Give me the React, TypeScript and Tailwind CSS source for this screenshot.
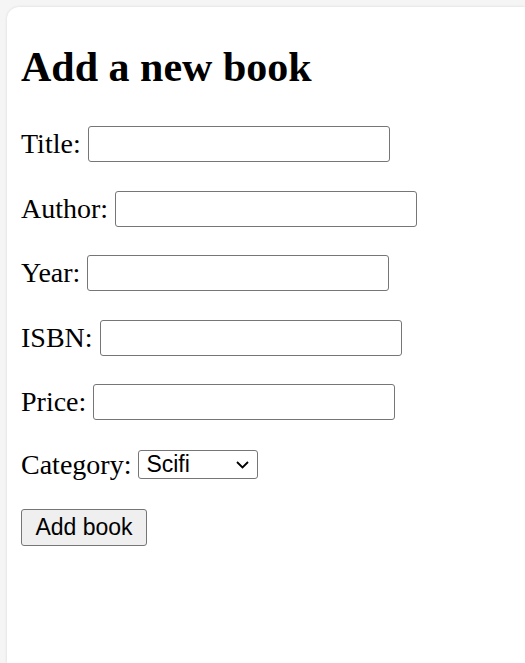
import React from 'react';

const fields = ['Title', 'Author', 'Year', 'ISBN', 'Price'];

export default function App() {
  return (
    <div className="min-h-screen bg-[#f5f5f5] pl-[7px] pt-[7px] overflow-hidden font-['Liberation_Serif',serif] text-black">
      <div className="bg-white rounded-tl-[12px] shadow-[0_0_3px_rgba(0,0,0,0.12)] min-h-[656px] pl-[14px] pt-[36px]">
        <h1 className="text-[42px] font-bold leading-[48px] mb-[35px]">Add a new book</h1>

        <form className="flex flex-col gap-[28px]" onSubmit={e => e.preventDefault()}>
          {fields.map(f => (
            <div key={f} className="flex items-center h-[36.5px] text-[28px]">
              <label className="leading-[32px]">{f}:</label>
              <input
                type="text"
                className="ml-[7px] w-[302px] h-[36px] border border-[#767676] rounded-[3px] bg-white px-[3px] font-['Liberation_Sans',sans-serif] text-[23px]"
              />
            </div>
          ))}

          <div className="flex items-center h-[32px] text-[28px]">
            <label className="leading-[32px]">Category:</label>
            <div className="relative flex ml-[7px]">
              <select className="appearance-none w-[120px] h-[29px] border border-[#767676] rounded-[3px] bg-white pl-[7px] font-['Liberation_Sans',sans-serif] text-[23px] leading-[27px]">
                <option>Scifi</option>
                <option>Fantasy</option>
                <option>Crime</option>
              </select>
              <svg className="absolute right-[9px] top-[11px] pointer-events-none" width="13" height="8" viewBox="0 0 13 8" fill="none">
                <path d="M1 1 L6.5 6.5 L12 1" stroke="black" strokeWidth="1.8" />
              </svg>
            </div>
          </div>

          <div>
            <button
              type="submit"
              className="w-[126px] h-[37px] bg-[#efefef] border border-[#767676] rounded-[3px] font-['Liberation_Sans',sans-serif] text-[23px] leading-[27px]"
            >
              Add book
            </button>
          </div>
        </form>
      </div>
    </div>
  );
}
